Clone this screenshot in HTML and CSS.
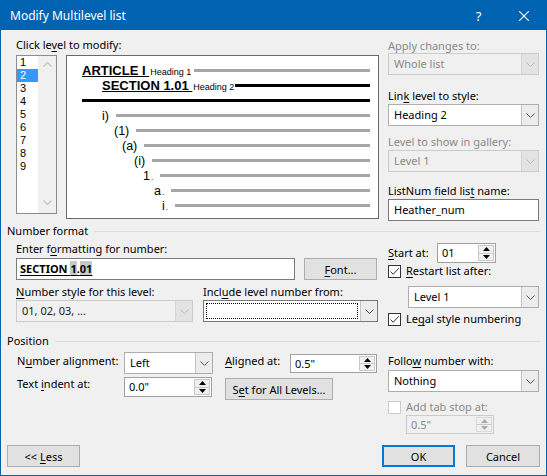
FILE: index.html
```html
<!DOCTYPE html>
<html lang="en">
<head>
    <meta charset="UTF-8">
    <title>Modify Multilevel list</title>
    <link rel="stylesheet" href="styles.css">
</head>
<body>
    <div class="dialog">
        <div class="titlebar">
            <div class="title">Modify Multilevel list</div>
            <div class="title-btn help">?</div>
            <div class="title-btn close">
                <svg width="10" height="10" viewBox="0 0 10 10">
                    <path d="M0 0 L10 10 M10 0 L0 10" stroke="#fff" stroke-width="1.1" />
                </svg>
            </div>
        </div>

        <!-- level list + preview + style options -->
        <div class="top">
            <div class="left-col">
                <div class="label first-label">Click le<u>v</u>el to modify:</div>
                <div class="level-row">
                    <div class="listbox">
                        <div class="level-items">
                            <div class="item">1</div>
                            <div class="item selected">2</div>
                            <div class="item">3</div>
                            <div class="item">4</div>
                            <div class="item">5</div>
                            <div class="item">6</div>
                            <div class="item">7</div>
                            <div class="item">8</div>
                            <div class="item">9</div>
                        </div>
                        <div class="scrollbar">
                            <svg width="9" height="5" viewBox="0 0 9 5"><path d="M0.5 4.5 L4.5 0.5 L8.5 4.5" fill="none" stroke="#c4c4c4" stroke-width="1.2" /></svg>
                            <svg width="9" height="5" viewBox="0 0 9 5"><path d="M0.5 0.5 L4.5 4.5 L8.5 0.5" fill="none" stroke="#c4c4c4" stroke-width="1.2" /></svg>
                        </div>
                    </div>
                    <div class="preview">
                        <div class="pv-row row-a">
                            <span class="pv-text"><span class="pv-head">ARTICLE I </span><span class="pv-style">Heading 1</span></span>
                            <span class="pv-line"></span>
                        </div>
                        <div class="pv-row row-b">
                            <span class="pv-text"><span class="pv-head">SECTION 1.01 </span><span class="pv-style">Heading 2</span></span>
                            <span class="pv-line black"></span>
                        </div>
                        <div class="pv-row row-c">
                            <span class="pv-line black full"></span>
                        </div>
                        <div class="pv-row lv-3"><span class="pv-num">i)</span><span class="pv-line"></span></div>
                        <div class="pv-row lv-4"><span class="pv-num">(1)</span><span class="pv-line"></span></div>
                        <div class="pv-row lv-5"><span class="pv-num">(a)</span><span class="pv-line"></span></div>
                        <div class="pv-row lv-6"><span class="pv-num">(i)</span><span class="pv-line"></span></div>
                        <div class="pv-row lv-7"><span class="pv-num">1<span class="dot">.</span></span><span class="pv-line"></span></div>
                        <div class="pv-row lv-8"><span class="pv-num">a<span class="dot">.</span></span><span class="pv-line"></span></div>
                        <div class="pv-row lv-9"><span class="pv-num">i<span class="dot">.</span></span><span class="pv-line"></span></div>
                    </div>
                </div>
            </div>

            <div class="right-col">
                <div class="label disabled apply-label">Apply changes to:</div>
                <div class="combo disabled">
                    <div class="combo-text">Whole list</div>
                    <div class="combo-arrow"><svg width="9" height="5" viewBox="0 0 9 5"><path d="M0.5 0.5 L4.5 4.5 L8.5 0.5" fill="none" stroke="#b8b8b8" stroke-width="1" /></svg></div>
                </div>
                <div class="label link-label">Lin<u>k</u> level to style:</div>
                <div class="combo tight">
                    <div class="combo-text">Heading 2</div>
                    <div class="combo-arrow"><svg width="9" height="5" viewBox="0 0 9 5"><path d="M0.5 0.5 L4.5 4.5 L8.5 0.5" fill="none" stroke="#555" stroke-width="1" /></svg></div>
                </div>
                <div class="label disabled gallery-label">Level to show in gallery:</div>
                <div class="combo disabled tight">
                    <div class="combo-text">Level 1</div>
                    <div class="combo-arrow"><svg width="9" height="5" viewBox="0 0 9 5"><path d="M0.5 0.5 L4.5 4.5 L8.5 0.5" fill="none" stroke="#b8b8b8" stroke-width="1" /></svg></div>
                </div>
                <div class="label listnum-label">ListNum field lis<u>t</u> name:</div>
                <div class="textbox tight">Heather_num</div>
            </div>
        </div>

        <!-- Number format -->
        <div class="group-title">Number format</div>
        <div class="group nf">
            <div class="left-col">
                <div class="label nf-label">Enter f<u>o</u>rmatting for number:</div>
                <div class="nf-row">
                    <div class="textbox format-box"><span class="fmt">SECTION <span class="field">1</span>.<span class="field">01</span></span></div>
                    <div class="button font-btn"><span><u>F</u>ont...</span></div>
                </div>
                <div class="nf-labels">
                    <div class="label style-label"><u>N</u>umber style for this level:</div>
                    <div class="label">Incl<u>u</u>de level number from:</div>
                </div>
                <div class="nf-row tight">
                    <div class="combo disabled style-combo dark">
                        <div class="combo-text">01, 02, 03, ...</div>
                        <div class="combo-arrow"><svg width="9" height="5" viewBox="0 0 9 5"><path d="M0.5 0.5 L4.5 4.5 L8.5 0.5" fill="none" stroke="#b8b8b8" stroke-width="1" /></svg></div>
                    </div>
                    <div class="combo include-combo">
                        <div class="combo-text"><span class="focus-rect"></span></div>
                        <div class="combo-arrow"><svg width="9" height="5" viewBox="0 0 9 5"><path d="M0.5 0.5 L4.5 4.5 L8.5 0.5" fill="none" stroke="#555" stroke-width="1" /></svg></div>
                    </div>
                </div>
            </div>
            <div class="right-col">
                <div class="start-row">
                    <div class="label start-label"><u>S</u>tart at:</div>
                    <div class="spin start-spin">
                        <div class="spin-text">01</div>
                        <div class="spin-btns">
                            <div class="spin-up"><svg width="7" height="4" viewBox="0 0 7 4"><path d="M0 4 L3.5 0 L7 4 Z" fill="#000" /></svg></div>
                            <div class="spin-down"><svg width="7" height="4" viewBox="0 0 7 4"><path d="M0 0 L3.5 4 L7 0 Z" fill="#000" /></svg></div>
                        </div>
                    </div>
                </div>
                <div class="check-row restart-row">
                    <span class="checkbox"><svg width="11" height="11" viewBox="0 0 11 11"><path d="M1.5 5.5 L4.2 8.3 L9.8 2.2" fill="none" stroke="#333" stroke-width="1" /></svg></span>
                    <span class="label"><u>R</u>estart list after:</span>
                </div>
                <div class="combo restart-combo">
                    <div class="combo-text">Level 1</div>
                    <div class="combo-arrow"><svg width="9" height="5" viewBox="0 0 9 5"><path d="M0.5 0.5 L4.5 4.5 L8.5 0.5" fill="none" stroke="#555" stroke-width="1" /></svg></div>
                </div>
                <div class="check-row legal-row">
                    <span class="checkbox"><svg width="11" height="11" viewBox="0 0 11 11"><path d="M1.5 5.5 L4.2 8.3 L9.8 2.2" fill="none" stroke="#333" stroke-width="1" /></svg></span>
                    <span class="label">Le<u>g</u>al style numbering</span>
                </div>
            </div>
        </div>

        <!-- Position -->
        <div class="group-title pos-title">Position</div>
        <div class="group pos">
            <div class="left-col">
                <div class="pos-row">
                    <div class="label pos-label shift">N<u>u</u>mber alignment:</div>
                    <div class="combo align-combo">
                        <div class="combo-text">Left</div>
                        <div class="combo-arrow"><svg width="9" height="5" viewBox="0 0 9 5"><path d="M0.5 0.5 L4.5 4.5 L8.5 0.5" fill="none" stroke="#555" stroke-width="1" /></svg></div>
                    </div>
                    <div class="label aligned-label shift"><u>A</u>ligned at:</div>
                    <div class="spin aligned-spin">
                        <div class="spin-text">0.5"</div>
                        <div class="spin-btns">
                            <div class="spin-up"><svg width="7" height="4" viewBox="0 0 7 4"><path d="M0 4 L3.5 0 L7 4 Z" fill="#000" /></svg></div>
                            <div class="spin-down"><svg width="7" height="4" viewBox="0 0 7 4"><path d="M0 0 L3.5 4 L7 0 Z" fill="#000" /></svg></div>
                        </div>
                    </div>
                </div>
                <div class="pos-row second">
                    <div class="label pos-label">Text <u>i</u>ndent at:</div>
                    <div class="spin indent-spin">
                        <div class="spin-text">0.0"</div>
                        <div class="spin-btns">
                            <div class="spin-up"><svg width="7" height="4" viewBox="0 0 7 4"><path d="M0 4 L3.5 0 L7 4 Z" fill="#000" /></svg></div>
                            <div class="spin-down"><svg width="7" height="4" viewBox="0 0 7 4"><path d="M0 0 L3.5 4 L7 0 Z" fill="#000" /></svg></div>
                        </div>
                    </div>
                    <div class="button levels-btn"><span>S<u>e</u>t for All Levels...</span></div>
                </div>
            </div>
            <div class="right-col">
                <div class="label follow-label">Follo<u>w</u> number with:</div>
                <div class="combo follow-combo">
                    <div class="combo-text">Nothing</div>
                    <div class="combo-arrow"><svg width="9" height="5" viewBox="0 0 9 5"><path d="M0.5 0.5 L4.5 4.5 L8.5 0.5" fill="none" stroke="#555" stroke-width="1" /></svg></div>
                </div>
                <div class="check-row tab-row">
                    <span class="checkbox off"></span>
                    <span class="label disabled">Add tab stop at:</span>
                </div>
                <div class="spin disabled tab-spin">
                    <div class="spin-text">0.5"</div>
                    <div class="spin-btns">
                        <div class="spin-up"><svg width="7" height="4" viewBox="0 0 7 4"><path d="M0 4 L3.5 0 L7 4 Z" fill="#a8a8a8" /></svg></div>
                        <div class="spin-down"><svg width="7" height="4" viewBox="0 0 7 4"><path d="M0 0 L3.5 4 L7 0 Z" fill="#a8a8a8" /></svg></div>
                    </div>
                </div>
            </div>
        </div>

        <div class="footer">
            <div class="button"><span>&lt;&lt; <u>L</u>ess</span></div>
            <div class="footer-right">
                <div class="button ok">OK</div>
                <div class="button cancel">Cancel</div>
            </div>
        </div>
    </div>
</body>
</html>
```

FILE: styles.css
```css
* {
    box-sizing: border-box;
}

body {
    margin: 0;
    background: #fff;
    font-family: "Noto Sans", "Liberation Sans", sans-serif;
    font-size: 11px;
    color: #000;
}

u {
    text-underline-offset: 2px;
}

.dialog {
    width: 547px;
    height: 476px;
    border: 1px solid #0063b1;
    background: #f0f0f0;
    display: flex;
    flex-direction: column;
}

/* Title bar */
.titlebar {
    height: 29px;
    flex-shrink: 0;
    background: #0063b1;
    color: #fff;
    display: flex;
    align-items: center;
}

.title {
    flex: 1;
    padding-left: 9px;
    font-size: 12px;
}

.title-btn {
    height: 29px;
    display: flex;
    align-items: center;
    justify-content: center;
}

.help {
    width: 45px;
    font-size: 13px;
}

.close {
    width: 45px;
}

/* Shared controls */
.label {
    line-height: 14px;
    white-space: nowrap;
}

.disabled,
.label.disabled {
    color: #8a8a8a;
}

.combo {
    display: flex;
    height: 22px;
    border: 1px solid #adadad;
    background: #fff;
}

.combo-text {
    flex: 1;
    padding-left: 5px;
    line-height: 20px;
    white-space: nowrap;
    overflow: hidden;
}

.combo-arrow {
    width: 17px;
    border-left: 1px solid #c4c4c4;
    background: #ececec;
    display: flex;
    align-items: center;
    justify-content: center;
}

.combo.disabled {
    background: #f0f0f0;
    border-color: #cccccc;
}

.combo.disabled .combo-arrow {
    background: #e3e3e3;
    border-left-color: #d4d4d4;
}

.combo.dark {
    color: #222;
}

.textbox {
    height: 22px;
    border: 1px solid #7a7a7a;
    background: #fff;
    padding-left: 5px;
    line-height: 20px;
}

.button {
    height: 22px;
    width: 73px;
    border: 1px solid #adadad;
    background: #e1e1e1;
    display: flex;
    align-items: center;
    justify-content: center;
    white-space: nowrap;
}

.spin {
    display: flex;
    height: 20px;
    border: 1px solid #a0a0a0;
    background: #fff;
}

.spin-text {
    flex: 1;
    padding-left: 4px;
    line-height: 18px;
}

.spin-btns {
    width: 16px;
    margin: 1px;
    display: flex;
    flex-direction: column;
    border: 1px solid #c8c8c8;
    background: #f0f0f0;
}

.spin-up,
.spin-down {
    flex: 1;
    display: flex;
    align-items: center;
    justify-content: center;
}

.spin-up {
    border-bottom: 1px solid #c8c8c8;
}

.spin.disabled {
    background: #f0f0f0;
    border-color: #cccccc;
}

.spin.disabled .spin-btns {
    border-color: #dadada;
}

.check-row {
    display: flex;
    align-items: center;
    height: 14px;
}

.checkbox {
    width: 13px;
    height: 13px;
    border: 1px solid #333;
    background: #fff;
    margin-right: 5px;
    display: flex;
    align-items: center;
    justify-content: center;
}

.checkbox.off {
    border-color: #cccccc;
}

/* Top area */
.top {
    display: flex;
    height: 194px;
    padding: 0 7px 0 15px;
    flex-shrink: 0;
}

.left-col {
    width: 363px;
}

.right-col {
    width: 151px;
    margin-left: 9px;
}

.first-label {
    margin-top: 8px;
}

.level-row {
    display: flex;
    margin-top: 3px;
}

.listbox {
    width: 41px;
    height: 159px;
    border: 1px solid #8c8c8c;
    background: #fff;
    display: flex;
}

.level-items {
    width: 21px;
    font-family: "Liberation Sans", Arial, sans-serif;
    font-size: 11px;
}

.item {
    height: 13px;
    line-height: 13px;
    padding-left: 3px;
}

.item.selected {
    background: #3399ff;
    color: #fff;
}

.scrollbar {
    flex: 1;
    background: #f0f0f0;
    display: flex;
    flex-direction: column;
    justify-content: space-between;
    align-items: center;
    padding: 6px 0 8px;
}

.preview {
    width: 313px;
    height: 164px;
    margin-left: 9px;
    border: 1px solid #6a6a6a;
    background: #fff;
    padding: 7px 8px 0 15px;
    font-family: "Liberation Sans", Arial, sans-serif;
}

.pv-row {
    display: flex;
    align-items: center;
    height: 15px;
}

.pv-text {
    display: flex;
    align-items: baseline;
}

.pv-head {
    font-size: 13px;
    font-weight: bold;
    text-decoration: underline;
    text-underline-offset: 1px;
    white-space: pre;
}

.pv-style {
    font-size: 9px;
    margin-left: 1px;
}

.pv-line {
    flex: 1;
    height: 3px;
    margin-left: 3px;
    background: #a6a6a6;
}

.pv-line.black {
    background: #000;
}

.pv-line.full {
    margin-left: 0;
}

.row-b {
    height: 14px;
    padding-left: 20px;
}

.row-b .pv-line {
    margin-left: 1px;
}

.row-c {
    height: 16px;
}

.pv-num {
    font-size: 12.5px;
    margin-right: 4px;
}

.dot {
    font-size: 8px;
    margin-left: 1px;
}

.lv-3 { padding-left: 20px; }
.lv-4 { padding-left: 32px; }
.lv-5 { padding-left: 40px; }
.lv-6 { padding-left: 52px; }
.lv-7 { padding-left: 61px; }
.lv-8 { padding-left: 72px; }
.lv-9 { padding-left: 80px; }

/* Right column of top area */
.apply-label {
    margin-top: 9px;
}

.link-label {
    margin-top: 14px;
}

.gallery-label {
    margin-top: 9px;
}

.listnum-label {
    margin-top: 12px;
}

.tight {
    margin-top: 1px;
}

/* Group headings */
.group-title {
    display: flex;
    align-items: center;
    line-height: 14px;
    padding: 0 6px;
    flex-shrink: 0;
}

.group-title::after {
    content: "";
    flex: 1;
    height: 1px;
    margin-left: 6px;
    background: #dcdcdc;
}

.pos-title {
    margin-top: 8px;
}

.group {
    display: flex;
    padding: 0 7px 0 15px;
}

/* Number format */
.nf-label {
    margin-top: 4px;
}

.nf-row {
    display: flex;
    margin-top: 2px;
}

.nf-row.tight {
    margin-top: 1px;
}

.format-box {
    width: 279px;
    padding-left: 3px;
}

.fmt {
    font-weight: bold;
    text-decoration: underline;
    text-underline-offset: 2px;
}

.field {
    background: #c8c8c8;
}

.font-btn {
    margin-left: 9px;
}

.nf-labels {
    display: flex;
    margin-top: 5px;
}

.style-label {
    width: 187px;
}

.style-combo {
    width: 177px;
}

.include-combo {
    width: 175px;
    margin-left: 10px;
    border-color: #7a7a7a;
}

.include-combo .combo-text {
    padding: 2px;
}

.focus-rect {
    display: block;
    height: 16px;
    border: 1px dotted #000;
}

.start-row {
    display: flex;
    align-items: center;
    margin-top: 5px;
}

.start-label {
    width: 49px;
}

.start-spin {
    width: 59px;
}

.restart-row {
    margin-top: 1px;
}

.restart-combo {
    margin-top: 8px;
    margin-left: 20px;
}

.legal-row {
    margin-top: 4px;
}

/* Position */
.pos-row {
    display: flex;
    align-items: flex-start;
    margin-top: 4px;
}

.pos-row.second {
    margin-top: 3px;
}

.shift {
    margin-top: 2px;
}

.pos-label {
    width: 108px;
    padding-left: 1px;
}

.align-combo {
    width: 89px;
}

.aligned-label {
    width: 65px;
    margin-left: 12px;
}

.aligned-spin {
    width: 87px;
    height: 19px;
    margin-top: 2px;
}

.indent-spin {
    width: 88px;
}

.levels-btn {
    width: 108px;
    margin-left: 13px;
    margin-top: 1px;
}

.follow-label {
    margin-top: 6px;
}

.follow-combo {
    margin-top: 2px;
}

.tab-row {
    margin-top: 8px;
}

.tab-spin {
    width: 88px;
    height: 19px;
    margin-top: 1px;
    margin-left: 18px;
}

/* Footer */
.footer {
    margin-top: auto;
    display: flex;
    justify-content: space-between;
    padding: 0 6px 8px 6px;
}

.footer-right {
    display: flex;
}

.ok {
    border: 2px solid #0078d7;
}

.cancel {
    width: 74px;
    margin-left: 11px;
}
```
